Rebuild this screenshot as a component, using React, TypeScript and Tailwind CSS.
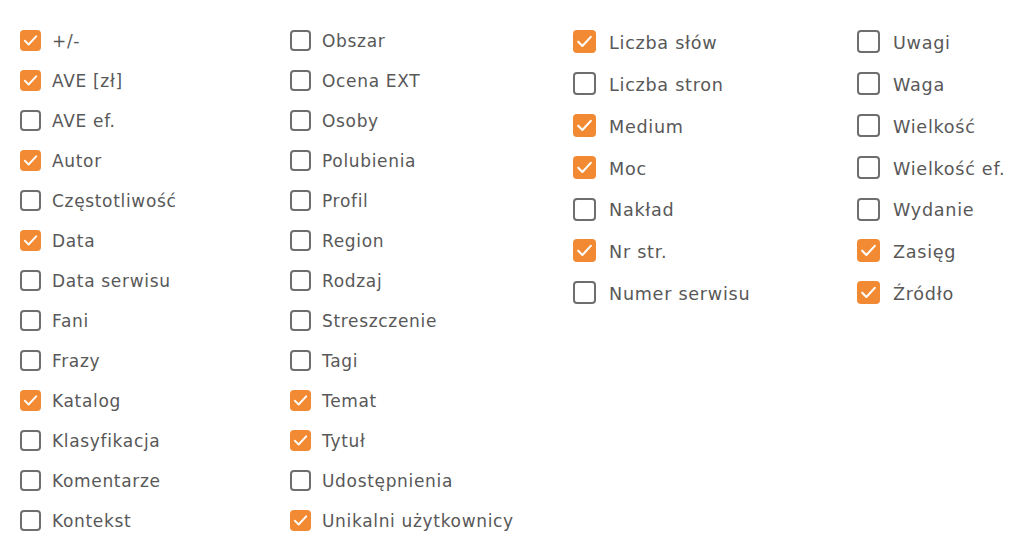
import React from "react";

type Item = { label: string; checked: boolean };

const col1: Item[] = [
  { label: "+/-", checked: true },
  { label: "AVE [zł]", checked: true },
  { label: "AVE ef.", checked: false },
  { label: "Autor", checked: true },
  { label: "Częstotliwość", checked: false },
  { label: "Data", checked: true },
  { label: "Data serwisu", checked: false },
  { label: "Fani", checked: false },
  { label: "Frazy", checked: false },
  { label: "Katalog", checked: true },
  { label: "Klasyfikacja", checked: false },
  { label: "Komentarze", checked: false },
  { label: "Kontekst", checked: false },
];

const col2: Item[] = [
  { label: "Obszar", checked: false },
  { label: "Ocena EXT", checked: false },
  { label: "Osoby", checked: false },
  { label: "Polubienia", checked: false },
  { label: "Profil", checked: false },
  { label: "Region", checked: false },
  { label: "Rodzaj", checked: false },
  { label: "Streszczenie", checked: false },
  { label: "Tagi", checked: false },
  { label: "Temat", checked: true },
  { label: "Tytuł", checked: true },
  { label: "Udostępnienia", checked: false },
  { label: "Unikalni użytkownicy", checked: true },
];

const col3: Item[] = [
  { label: "Liczba słów", checked: true },
  { label: "Liczba stron", checked: false },
  { label: "Medium", checked: true },
  { label: "Moc", checked: true },
  { label: "Nakład", checked: false },
  { label: "Nr str.", checked: true },
  { label: "Numer serwisu", checked: false },
];

const col4: Item[] = [
  { label: "Uwagi", checked: false },
  { label: "Waga", checked: false },
  { label: "Wielkość", checked: false },
  { label: "Wielkość ef.", checked: false },
  { label: "Wydanie", checked: false },
  { label: "Zasięg", checked: true },
  { label: "Źródło", checked: true },
];

const Box = ({ checked, big }: { checked: boolean; big?: boolean }) => (
  <span
    className={`${big ? "w-[23px] h-[23px]" : "w-[21px] h-[21px]"} shrink-0 rounded-[4px] flex items-center justify-center ${
      checked ? "bg-[#f28a33]" : "border-2 border-[#6e6e6e] bg-white"
    }`}
  >
    {checked && (
      <svg viewBox="0 0 20 20" className={big ? "w-[21px] h-[21px]" : "w-[19px] h-[19px]"}>
        <path d="M4 10.2 L8 14.2 L16 5.6" fill="none" stroke="#fff" strokeWidth="2" strokeLinecap="round" strokeLinejoin="round" />
      </svg>
    )}
  </span>
);

const Column = ({ items, big, width }: { items: Item[]; big?: boolean; width: string }) => (
  <div className={`flex flex-col ${width}`}>
    {items.map((it) => (
      <label
        key={it.label}
        className={`flex items-center ${
          big ? "h-[41.8px] gap-[13px] text-[17.6px] tracking-[0.72px]" : "h-[40px] gap-[11px] text-[17px] tracking-[0.67px]"
        } text-[#585858] whitespace-nowrap`}
      >
        <Box checked={it.checked} big={big} />
        <span className="pt-[3px]">{it.label}</span>
      </label>
    ))}
  </div>
);

export default function App() {
  return (
    <div
      className="w-[1024px] h-[543px] bg-white flex overflow-hidden"
      style={{ fontFamily: '"DejaVu Sans", sans-serif' }}
    >
      <div className="flex pl-[20px] pt-[20px]">
        <Column items={col1} width="w-[270px]" />
        <Column items={col2} width="w-[283px]" />
      </div>
      <div className="flex pt-[21px]">
        <Column items={col3} big width="w-[284px]" />
        <Column items={col4} big width="w-[160px]" />
      </div>
    </div>
  );
}
